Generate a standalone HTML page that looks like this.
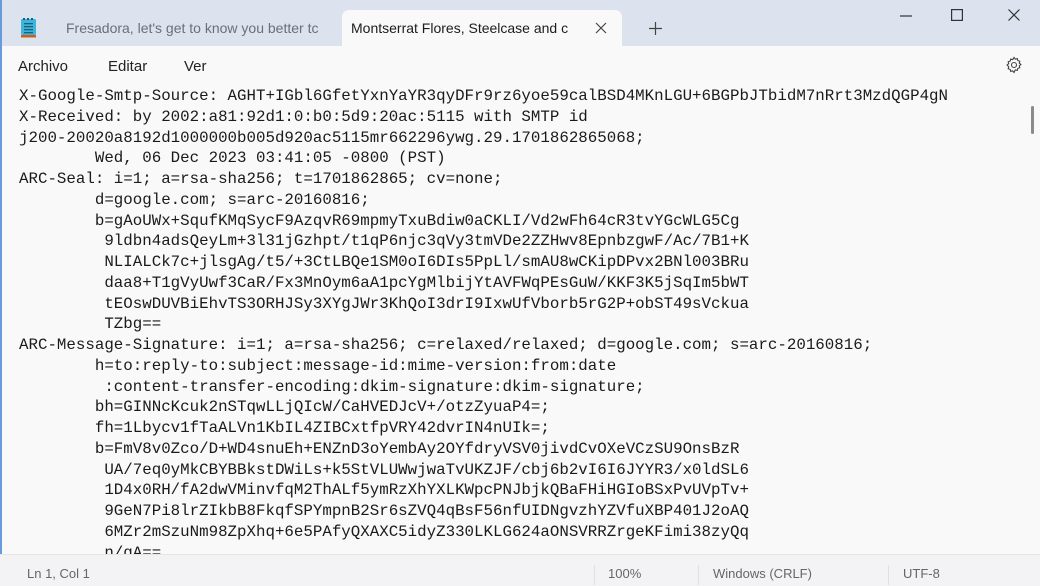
<!DOCTYPE html>
<html><head><meta charset="utf-8">
<style>
*{margin:0;padding:0;box-sizing:border-box}
body{width:1040px;height:586px;overflow:hidden;background:#f9f9f9;font-family:"Liberation Sans",sans-serif;position:relative}
.title{position:absolute;left:0;top:0;width:1040px;height:46px;background:#dce2ee}
.leftedge{position:absolute;left:0;top:0;width:2px;height:586px;background:#6a9ad8}
.tab1{position:absolute;left:66px;top:20px;font-size:14px;color:#6b6f78;white-space:nowrap;width:272px;overflow:hidden}
.tab2{position:absolute;left:342px;top:10px;width:280px;height:36px;background:#f9f9f9;border-radius:7px 7px 0 0}
.tab2 span{position:absolute;left:9px;top:10px;font-size:14px;color:#1c1c1c;white-space:nowrap;width:238px;overflow:hidden}
.x{position:absolute;font-size:16px;color:#333}
.menu{position:absolute;top:58px;font-size:15px;color:#222}
pre{position:absolute;left:19px;top:86px;font-family:"Liberation Mono",monospace;font-size:15.8px;line-height:20.75px;color:#1a1a1a;height:468px;overflow:hidden}
.status{position:absolute;left:0;top:554px;width:1040px;height:32px;background:#f3f3f5;border-top:1px solid #e5e5e5;font-size:13px;color:#666}
.status span{position:absolute;top:11px}
.sep{position:absolute;top:10px;width:1px;height:20px;background:#e0e0e0}
.thumb{position:absolute;left:1031px;top:106px;width:3px;height:28px;background:#8a8a8a;border-radius:2px}
</style></head><body>
<div class="title"></div>
<div class="leftedge"></div>
<svg style="position:absolute;left:20px;top:17px" width="17" height="21" viewBox="0 0 17 21">
<rect x="1" y="2" width="15" height="16" rx="1.5" fill="#3cb4dc"/>
<rect x="1" y="18" width="15" height="2.5" fill="#c4621a"/>
<rect x="3" y="1" width="2" height="2" fill="#1d5d7a"/><rect x="7" y="1" width="2" height="2" fill="#1d5d7a"/><rect x="11" y="1" width="2" height="2" fill="#1d5d7a"/>
<rect x="4" y="6" width="9" height="1.3" fill="#1d5d7a"/><rect x="4" y="9" width="9" height="1.3" fill="#1d5d7a"/><rect x="4" y="12" width="9" height="1.3" fill="#1d5d7a"/><rect x="4" y="15" width="9" height="1.3" fill="#1d5d7a"/>
</svg>
<div class="tab1">Fresadora, let's get to know you better tc</div>
<div class="tab2"><span>Montserrat Flores, Steelcase and c</span></div>
<svg style="position:absolute;left:595px;top:22px" width="12" height="12"><path d="M1 1L11 11M11 1L1 11" stroke="#444" stroke-width="1.2"/></svg>
<svg style="position:absolute;left:649px;top:22px" width="13" height="13"><path d="M6.5 0V13M0 6.5H13" stroke="#444" stroke-width="1.2"/></svg>
<svg style="position:absolute;left:900px;top:15px" width="12" height="2"><path d="M0 1H12" stroke="#333" stroke-width="1.2"/></svg>
<svg style="position:absolute;left:951px;top:9px" width="12" height="12"><rect x="0.6" y="0.6" width="10.8" height="10.8" fill="none" stroke="#333" stroke-width="1.2"/></svg>
<svg style="position:absolute;left:1008px;top:9px" width="12" height="12"><path d="M0.5 0.5L11.5 11.5M11.5 0.5L0.5 11.5" stroke="#333" stroke-width="1.2"/></svg>
<div class="menu" style="left:18px">Archivo</div>
<div class="menu" style="left:108px">Editar</div>
<div class="menu" style="left:184px">Ver</div>
<svg style="position:absolute;left:1005px;top:56px" width="18" height="18" viewBox="0 0 18 18"><path d="M9 1.5l1.3 1.6 2-.5.5 2 2 .6-.5 2 1.6 1.3-1.6 1.3.5 2-2 .6-.5 2-2-.5L9 16.5l-1.3-1.6-2 .5-.5-2-2-.6.5-2L2.1 9l1.6-1.3-.5-2 2-.6.5-2 2 .5z" fill="none" stroke="#444" stroke-width="1.1"/><circle cx="9" cy="9" r="2.5" fill="none" stroke="#444" stroke-width="1.1"/></svg>
<pre>X-Google-Smtp-Source: AGHT+IGbl6GfetYxnYaYR3qyDFr9rz6yoe59calBSD4MKnLGU+6BGPbJTbidM7nRrt3MzdQGP4gN
X-Received: by 2002:a81:92d1:0:b0:5d9:20ac:5115 with SMTP id
j200-20020a8192d1000000b005d920ac5115mr662296ywg.29.1701862865068;
        Wed, 06 Dec 2023 03:41:05 -0800 (PST)
ARC-Seal: i=1; a=rsa-sha256; t=1701862865; cv=none;
        d=google.com; s=arc-20160816;
        b=gAoUWx+SqufKMqSycF9AzqvR69mpmyTxuBdiw0aCKLI/Vd2wFh64cR3tvYGcWLG5Cg
         9ldbn4adsQeyLm+3l31jGzhpt/t1qP6njc3qVy3tmVDe2ZZHwv8EpnbzgwF/Ac/7B1+K
         NLIALCk7c+jlsgAg/t5/+3CtLBQe1SM0oI6DIs5PpLl/smAU8wCKipDPvx2BNl003BRu
         daa8+T1gVyUwf3CaR/Fx3MnOym6aA1pcYgMlbijYtAVFWqPEsGuW/KKF3K5jSqIm5bWT
         tEOswDUVBiEhvTS3ORHJSy3XYgJWr3KhQoI3drI9IxwUfVborb5rG2P+obST49sVckua
         TZbg==
ARC-Message-Signature: i=1; a=rsa-sha256; c=relaxed/relaxed; d=google.com; s=arc-20160816;
        h=to:reply-to:subject:message-id:mime-version:from:date
         :content-transfer-encoding:dkim-signature:dkim-signature;
        bh=GINNcKcuk2nSTqwLLjQIcW/CaHVEDJcV+/otzZyuaP4=;
        fh=1Lbycv1fTaALVn1KbIL4ZIBCxtfpVRY42dvrIN4nUIk=;
        b=FmV8v0Zco/D+WD4snuEh+ENZnD3oYembAy2OYfdryVSV0jivdCvOXeVCzSU9OnsBzR
         UA/7eq0yMkCBYBBkstDWiLs+k5StVLUWwjwaTvUKZJF/cbj6b2vI6I6JYYR3/x0ldSL6
         1D4x0RH/fA2dwVMinvfqM2ThALf5ymRzXhYXLKWpcPNJbjkQBaFHiHGIoBSxPvUVpTv+
         9GeN7Pi8lrZIkbB8FkqfSPYmpnB2Sr6sZVQ4qBsF56nfUIDNgvzhYZVfuXBP401J2oAQ
         6MZr2mSzuNm98ZpXhq+6e5PAfyQXAXC5idyZ330LKLG624aONSVRRZrgeKFimi38zyQq
         n/gA==</pre>
<div class="thumb"></div>
<div class="status">
<span style="left:27px">Ln 1, Col 1</span>
<div class="sep" style="left:594px"></div>
<span style="left:608px">100%</span>
<div class="sep" style="left:698px"></div>
<span style="left:713px">Windows (CRLF)</span>
<div class="sep" style="left:888px"></div>
<span style="left:903px">UTF-8</span>
</div>
</body></html>
